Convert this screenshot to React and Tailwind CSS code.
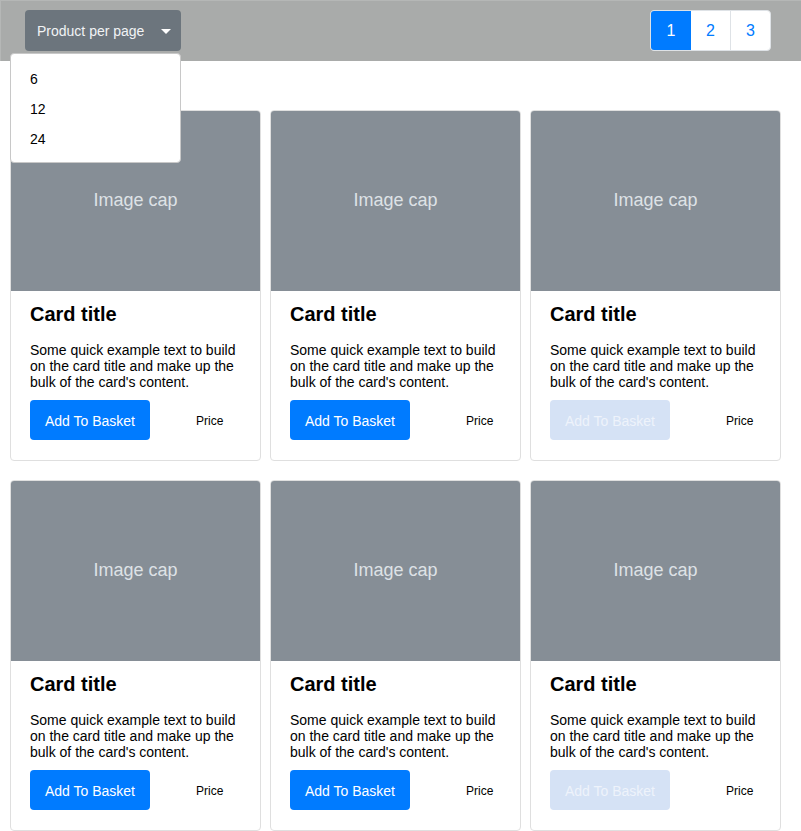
import React from "react";

function Card({ disabled, first }) {
  return (
    <div className="flex flex-col rounded-[4px] border border-[#dfdfdf] bg-white overflow-hidden">
      <div className="h-[180px] bg-[#868e96] flex items-center justify-center pb-[2px] text-[18px] text-[#dee2e6]">
        Image cap
      </div>
      <div className="px-[19px] pt-[11px] pb-[20px]">
        <div className="text-[20px] leading-[24px] font-bold text-black">Card title</div>
        <p className="mt-4 text-[14px] leading-[16px] text-black">
          Some quick example text to build on the card title and make up the bulk of the card's content.
        </p>
        <div className="mt-[10px] flex items-center">
          <button
            className={
              "h-[40px] w-[120px] rounded-[4px] pt-[2px] text-[14px] " +
              (disabled ? "bg-[#d5e2f5] text-[#eef3fb]" : "bg-[#007bff] text-white")
            }
          >
            Add To Basket
          </button>
          <span className={(first ? "ml-[46px]" : "ml-[56px]") + " pt-[2px] text-[12px] text-black"}>Price</span>
        </div>
      </div>
    </div>
  );
}

export default function App() {
  return (
    <div className="relative w-[801px] min-h-[831px] bg-white" style={{ fontFamily: '"Liberation Sans", Arial, sans-serif' }}>
      <div className="h-[61px] border-t border-l border-[#b5b7b6] bg-[#a9abaa] flex items-start justify-between pl-[24px] pr-[30px] pt-[9px]">
        <button className="h-[41px] w-[156px] rounded-[4px] bg-[#6c757d] flex items-center pl-[12px] pr-[8px] pt-[1px] text-[14px] text-[#f1f3f5]">
          <span>Product per page</span>
          <svg className="ml-auto mr-[2px]" width="10" height="5" viewBox="0 0 10 5">
            <polygon points="0,0 10,0 5,5" fill="#ffffff" />
          </svg>
        </button>
        <div className="flex h-[41px] rounded-[4px] overflow-hidden border border-[#dee2e6] bg-white text-[16px]">
          <div className="w-[40px] flex items-center justify-center bg-[#007bff] text-white">1</div>
          <div className="w-[40px] flex items-center justify-center text-[#007bff] border-r border-[#dee2e6]">2</div>
          <div className="w-[39px] flex items-center justify-center text-[#007bff]">3</div>
        </div>
      </div>
      <div className="absolute left-[10px] top-[53px] z-10 w-[171px] h-[110px] rounded-[4px] border border-[#c8c8c8] bg-white py-[10px] text-[14px] text-black">
        <div className="h-[30px] flex items-center pl-[19px]">6</div>
        <div className="h-[30px] flex items-center pl-[19px]">12</div>
        <div className="h-[30px] flex items-center pl-[19px]">24</div>
      </div>
      <div className="grid grid-cols-3 gap-x-[9px] gap-y-[19px] pl-[10px] pr-[20px] pt-[49px]">
        <Card first />
        <Card />
        <Card disabled />
        <Card first />
        <Card />
        <Card disabled />
      </div>
    </div>
  );
}
